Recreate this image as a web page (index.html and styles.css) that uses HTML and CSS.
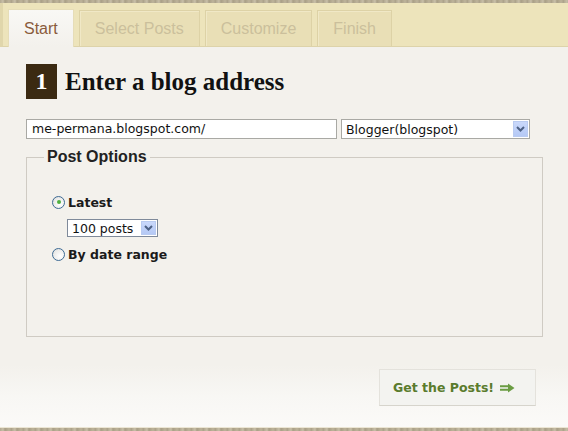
FILE: index.html
```html
<!DOCTYPE html>
<html>
<head>
<meta charset="utf-8">
<link rel="stylesheet" href="styles.css">
</head>
<body>
<div class="page">
  <div class="strip strip-top"></div>
  <div class="tabbar">
    <div class="tab active">Start</div>
    <div class="tab">Select Posts</div>
    <div class="tab">Customize</div>
    <div class="tab">Finish</div>
  </div>
  <div class="content">
    <div class="step">
      <div class="num">1</div>
      <h1 class="title">Enter a blog address</h1>
    </div>
    <div class="inputs">
      <div class="textbox">me-permana.blogspot.com/</div>
      <div class="select wide">
        <span class="sel-text">Blogger(blogspot)</span>
        <span class="sel-btn"><svg width="9" height="6" viewBox="0 0 9 6"><path d="M1 1 L4.5 4.5 L8 1" fill="none" stroke="#4d6185" stroke-width="2"/></svg></span>
      </div>
    </div>
    <fieldset class="options">
      <legend class="legend">Post Options</legend>
      <div class="opts-body">
        <div class="radio-row">
          <span class="radio checked"></span>
          <span class="radio-label">Latest</span>
        </div>
        <div class="select small">
          <span class="sel-text">100 posts</span>
          <span class="sel-btn"><svg width="9" height="6" viewBox="0 0 9 6"><path d="M1 1 L4.5 4.5 L8 1" fill="none" stroke="#4d6185" stroke-width="2"/></svg></span>
        </div>
        <div class="radio-row">
          <span class="radio"></span>
          <span class="radio-label">By date range</span>
        </div>
      </div>
    </fieldset>
    <div class="footer">
      <div class="button">Get the Posts! <svg class="arrow" width="15" height="10" viewBox="0 0 15 10"><path d="M0 2.2h9v2H0z M0 5.8h9v2H0z M8 0.5 L14.5 5 L8 9.5z" fill="#6a9c42"/></svg></div>
    </div>
  </div>
  <div class="strip strip-bottom"></div>
</div>
</body>
</html>
```

FILE: styles.css
```css
html, body {
  margin: 0;
  padding: 0;
  background: #f3f1ec;
}
.page {
  width: 568px;
  height: 431px;
  display: flex;
  flex-direction: column;
  overflow: hidden;
  background: #f3f1ec;
}
.strip {
  flex: none;
  background: repeating-linear-gradient(90deg, #b4aa92 0px, #c8bfa8 3px, #a99f86 5px, #bdb39a 9px, #aaa088 12px);
}
.strip-top {
  height: 3px;
}
.strip-bottom {
  height: 3px;
  border-top: 1px solid #ebe5d3;
}
.tabbar {
  flex: none;
  height: 43px;
  background: #ede4bb;
  border-bottom: 1px solid #ddd3aa;
  border-left: 3px solid #e0d6ab;
  padding-left: 5px;
  display: flex;
  align-items: flex-end;
  gap: 5px;
}
.tab {
  height: 35px;
  padding: 0 15px;
  display: flex;
  align-items: center;
  font-family: "Liberation Sans", Arial, sans-serif;
  font-size: 16px;
  color: #cbbf9c;
  background: #e9dfb6;
  border: 1px solid #ddd2a6;
  border-bottom: none;
  box-shadow: inset 1px 1px 0 #f0e8c6;
}
.tab.active {
  height: 37px;
  margin-bottom: -1px;
  padding: 0 15px 0 15px;
  color: #8a5b3c;
  background: linear-gradient(#f9f8f5, #f3f1ec);
  border-color: #e6ddb8;
  box-shadow: none;
}
.content {
  flex: 1;
  display: flex;
  flex-direction: column;
  padding: 17px 25px 0 26px;
  background: linear-gradient(#f3f1ec 0px, #f3f1ec 318px, #f8f7f4 350px, #fbfaf8 380px);
}
.step {
  display: flex;
  align-items: center;
  gap: 8px;
  height: 35px;
}
.num {
  width: 31px;
  height: 35px;
  background: #3b2a12;
  color: #fff;
  font-family: "Liberation Serif", "Times New Roman", serif;
  font-weight: bold;
  font-size: 24px;
  display: flex;
  align-items: center;
  justify-content: center;
}
.title {
  margin: 0;
  font-family: "Liberation Serif", "Times New Roman", serif;
  font-weight: bold;
  font-size: 25px;
  color: #111;
  line-height: 35px;
}
.inputs {
  display: flex;
  gap: 4px;
  margin-top: 20px;
}
.textbox {
  width: 301px;
  height: 18px;
  padding: 0 3px 0 5px;
  background: #fff;
  border: 1px solid #a9a9a4;
  font-family: "DejaVu Sans", Verdana, sans-serif;
  font-size: 12.5px;
  line-height: 18px;
  color: #111;
  white-space: nowrap;
  overflow: hidden;
}
.select {
  height: 18px;
  background: #fff;
  border: 1px solid #a9a9a4;
  display: flex;
  align-items: center;
  justify-content: space-between;
  font-family: "DejaVu Sans", Verdana, sans-serif;
  font-size: 12.5px;
  color: #111;
}
.select.wide {
  width: 187px;
}
.select.small {
  width: 89px;
  height: 16px;
  margin: 8px 0 8px 15px;
  border-color: #7f8a9a;
}
.sel-text {
  padding-left: 4px;
  white-space: nowrap;
}
.sel-btn {
  width: 15px;
  height: 16px;
  margin-right: 1px;
  background: linear-gradient(#c9d8fb, #b5c9f5);
  border: 1px solid #b9cbf1;
  box-sizing: border-box;
  display: flex;
  align-items: center;
  justify-content: center;
}
.select.small .sel-btn {
  height: 14px;
}
.options {
  margin: 9px 0 0 0;
  width: 517px;
  height: 189px;
  box-sizing: border-box;
  border: 1px solid #cfcbc3;
  padding: 0;
}
.legend {
  margin-left: 17px;
  padding: 0 3px;
  font-family: "Liberation Sans", Arial, sans-serif;
  font-weight: bold;
  font-size: 16px;
  color: #222;
}
.opts-body {
  padding: 27px 0 0 25px;
}
.radio-row {
  display: flex;
  align-items: center;
  gap: 3px;
  height: 18px;
}
.radio {
  width: 11px;
  height: 11px;
  border-radius: 50%;
  border: 1px solid #3d6a94;
  background: radial-gradient(circle at 65% 65%, #fff 0%, #ececea 60%, #d8d8d2 100%);
  position: relative;
  box-sizing: content-box;
}
.radio.checked::after {
  content: "";
  position: absolute;
  left: 3.5px;
  top: 3.5px;
  width: 4px;
  height: 4px;
  border-radius: 50%;
  background: #4fb040;
}
.radio-label {
  font-family: "DejaVu Sans", Verdana, sans-serif;
  font-weight: bold;
  font-size: 12.5px;
  color: #1a1a1a;
}
.footer {
  display: flex;
  justify-content: flex-end;
  margin-top: 32px;
  padding-right: 7px;
}
.button {
  width: 157px;
  height: 37px;
  box-sizing: border-box;
  padding-left: 13px;
  display: flex;
  align-items: center;
  background: #f3f3f0;
  border: 1px solid #e4e2dc;
  border-bottom-color: #d6d4cc;
  font-family: "DejaVu Sans", Verdana, sans-serif;
  font-weight: bold;
  font-size: 12.5px;
  color: #5a7b2d;
  white-space: pre;
}
.arrow {
  margin-left: 2px;
}
```
